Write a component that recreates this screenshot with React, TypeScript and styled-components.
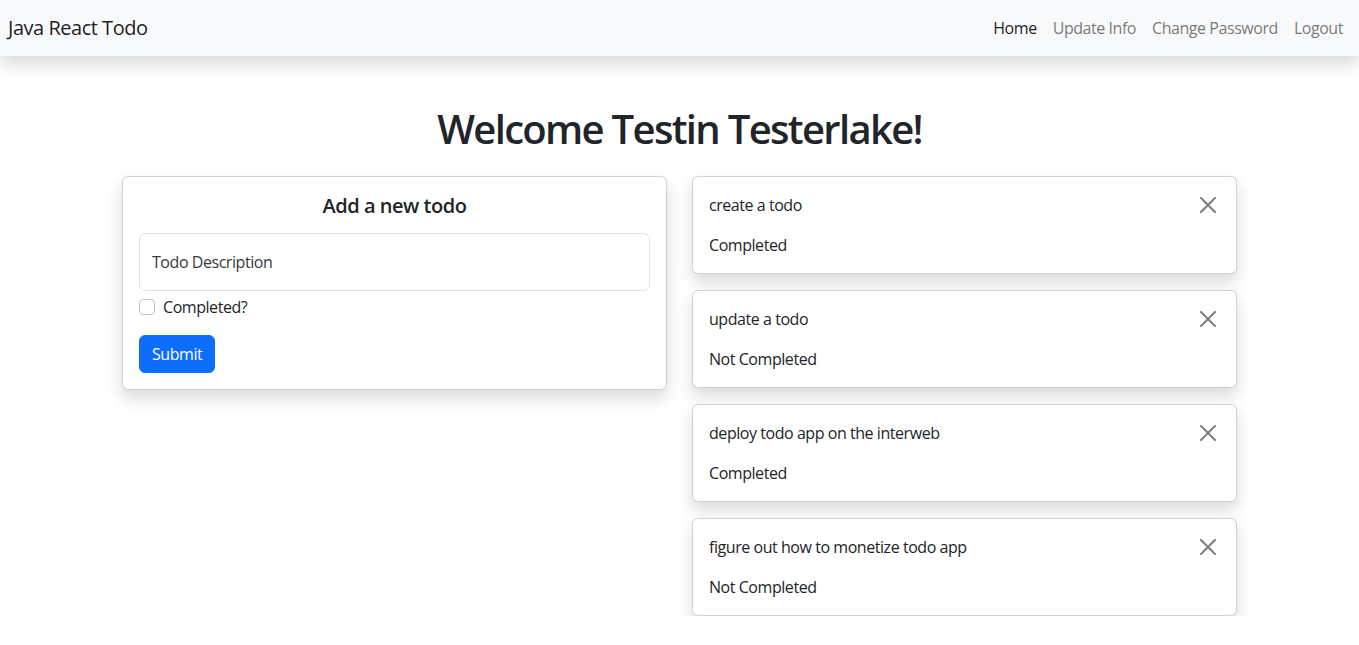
import React from "react";
import styled, { createGlobalStyle } from "styled-components";

const GlobalStyle = createGlobalStyle`
  html, body { margin: 0; padding: 0; background: #fff; }
  body {
    font-family: "Open Sans", "Noto Sans", sans-serif;
    font-size: 16px;
    line-height: 1.5;
    letter-spacing: -0.028em;
    color: #212529;
  }
  * { box-sizing: border-box; }
`;

const NavBar = styled.nav`
  height: 56px;
  background: #f8f9fa;
  box-shadow: 0 0.5rem 1rem rgba(0, 0, 0, 0.15);
  display: flex;
  align-items: center;
  justify-content: space-between;
  padding: 0 8px;
  position: relative;
  z-index: 1;
`;

const Brand = styled.a`
  font-size: 20px;
  line-height: 30px;
  letter-spacing: -0.024em;
  color: rgba(0, 0, 0, 0.9);
  text-decoration: none;
`;

const NavList = styled.div`
  display: flex;
`;

const NavLink = styled.a<{ $active?: boolean }>`
  padding: 8px;
  font-size: 16px;
  line-height: 24px;
  text-decoration: none;
  color: ${(p) => (p.$active ? "rgba(0,0,0,0.9)" : "rgba(0,0,0,0.55)")};
`;

const Main = styled.main`
  display: flex;
  flex-direction: column;
  align-items: center;
  padding-top: 49px;
`;

const Heading = styled.h1`
  margin: 0 0 23px;
  font-size: 40px;
  line-height: 48px;
  font-weight: 600;
  letter-spacing: -0.042em;
  text-align: center;
`;

const Columns = styled.div`
  width: 1115px;
  display: grid;
  grid-template-columns: 545px 545px;
  justify-content: space-between;
  align-items: start;
`;

const Card = styled.div`
  background: #fff;
  border: 1px solid rgba(0, 0, 0, 0.175);
  border-radius: 6px;
  box-shadow: 0 0.5rem 1rem rgba(0, 0, 0, 0.15);
  padding: 16px;
`;

const CardTitle = styled.h5`
  margin: 1px 0 15px;
  font-size: 20px;
  line-height: 24px;
  font-weight: 600;
  letter-spacing: -0.024em;
  text-align: center;
`;

const InputBox = styled.input`
  display: block;
  width: 100%;
  height: 58px;
  padding: 0 12px;
  border: 1px solid #dee2e6;
  border-radius: 6px;
  font-family: inherit;
  font-size: 16px;
  letter-spacing: inherit;
  color: #212529;
  outline: none;
  &::placeholder { color: #212529; opacity: 0.9; }
`;

const CheckRow = styled.label`
  display: flex;
  align-items: center;
  gap: 8px;
  margin-top: 4px;
  height: 24px;
  font-size: 16px;
`;

const CheckBox = styled.span`
  width: 16px;
  height: 16px;
  border: 1px solid #bfc3c7;
  border-radius: 4px;
  background: #fff;
`;

const SubmitButton = styled.button`
  margin-top: 16px;
  height: 38px;
  padding: 0 12px;
  background: #0d6efd;
  border: 1px solid #0d6efd;
  border-radius: 6px;
  color: #fff;
  font-family: inherit;
  font-size: 16px;
  letter-spacing: inherit;
  line-height: 24px;
`;

const TodoList = styled.div`
  display: flex;
  flex-direction: column;
  gap: 16px;
`;

const TodoHead = styled.div`
  display: flex;
  justify-content: space-between;
  align-items: flex-start;
`;

const TodoText = styled.p`
  margin: 0;
  font-size: 16px;
  line-height: 24px;
`;

const TodoStatus = styled.p`
  margin: 16px 0 0;
  font-size: 16px;
  line-height: 24px;
`;

const CloseButton = styled.button`
  width: 24px;
  height: 24px;
  padding: 4px;
  border: 0;
  background: transparent;
  opacity: 0.5;
  display: flex;
  align-items: center;
  justify-content: center;
  svg { width: 16px; height: 16px; display: block; }
`;

const todos = [
  { text: "create a todo", done: true },
  { text: "update a todo", done: false },
  { text: "deploy todo app on the interweb", done: true },
  { text: "figure out how to monetize todo app", done: false },
];

const CloseIcon = () => (
  <svg viewBox="0 0 16 16" fill="#000">
    <path d="M.293.293a1 1 0 0 1 1.414 0L8 6.586 14.293.293a1 1 0 1 1 1.414 1.414L9.414 8l6.293 6.293a1 1 0 0 1-1.414 1.414L8 9.414l-6.293 6.293a1 1 0 0 1-1.414-1.414L6.586 8 .293 1.707a1 1 0 0 1 0-1.414z" />
  </svg>
);

export default function App() {
  return (
    <>
      <GlobalStyle />
      <NavBar>
        <Brand href="#">Java React Todo</Brand>
        <NavList>
          <NavLink $active href="#">Home</NavLink>
          <NavLink href="#">Update Info</NavLink>
          <NavLink href="#">Change Password</NavLink>
          <NavLink href="#">Logout</NavLink>
        </NavList>
      </NavBar>
      <Main>
        <Heading>Welcome Testin Testerlake!</Heading>
        <Columns>
          <Card>
            <CardTitle>Add a new todo</CardTitle>
            <InputBox placeholder="Todo Description" />
            <CheckRow>
              <CheckBox />
              Completed?
            </CheckRow>
            <SubmitButton>Submit</SubmitButton>
          </Card>
          <TodoList>
            {todos.map((t) => (
              <Card key={t.text}>
                <TodoHead>
                  <TodoText>{t.text}</TodoText>
                  <CloseButton aria-label="Close">
                    <CloseIcon />
                  </CloseButton>
                </TodoHead>
                <TodoStatus>{t.done ? "Completed" : "Not Completed"}</TodoStatus>
              </Card>
            ))}
          </TodoList>
        </Columns>
      </Main>
    </>
  );
}
